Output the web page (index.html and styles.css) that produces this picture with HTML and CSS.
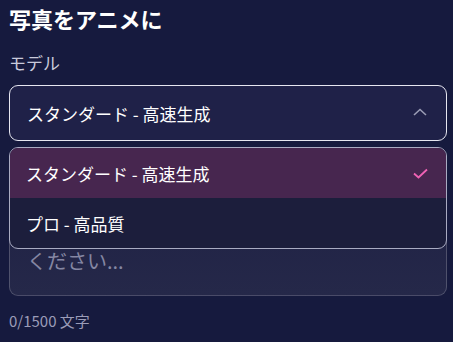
FILE: index.html
```html
<!DOCTYPE html>
<html lang="ja">
<head>
    <meta charset="UTF-8">
    <meta name="viewport" content="width=device-width, initial-scale=1.0">
    <title>写真をアニメに</title>
    <link rel="stylesheet" href="styles.css">
</head>
<body>
    <div class="panel">
        <h2 class="title">写真をアニメに</h2>

        <label class="label">モデル</label>
        <div class="select-wrap">
            <div class="select">
                <span>スタンダード - 高速生成</span>
                <svg class="chevron" width="14" height="8" viewBox="0 0 14 8">
                    <path d="M1 7 L7 1.5 L13 7" fill="none" stroke="#9b9db5" stroke-width="1.6"/>
                </svg>
            </div>
            <div class="dropdown">
                <div class="option selected">
                    <span>スタンダード - 高速生成</span>
                    <svg class="check" width="15" height="11" viewBox="0 0 15 11">
                        <path d="M1 5.5 L5.5 9.5 L14 1.5" fill="none" stroke="#f062b4" stroke-width="1.8"/>
                    </svg>
                </div>
                <div class="option">
                    <span>プロ - 高品質</span>
                </div>
            </div>
        </div>

        <div class="prompt">
            <div class="placeholder">ください...</div>
        </div>
        <div class="counter">0/1500 文字</div>
    </div>
</body>
</html>
```

FILE: styles.css
```css
* {
    margin: 0;
    padding: 0;
    box-sizing: border-box;
    font-family: 'Noto Sans CJK JP', 'Noto Sans', sans-serif;
}

body {
    background: #161a3e;
    color: #fff;
    overflow: hidden;
}

.panel {
    padding: 0 6px 0 9px;
}

.title {
    font-size: 22px;
    font-weight: 700;
    line-height: 30px;
    margin-top: 3px;
}

.label {
    display: block;
    margin-top: 18px;
    font-size: 17px;
    line-height: 24px;
    color: #c9cadb;
}

.select-wrap {
    position: relative;
    margin-top: 10px;
}

.select {
    display: flex;
    align-items: center;
    justify-content: space-between;
    height: 56px;
    padding: 0 19px 0 17px;
    background: #1f2148;
    border: 1px solid #e6e6f0;
    border-radius: 9px;
    font-size: 17px;
}

.chevron {
    margin-top: -3px;
}

.dropdown {
    position: absolute;
    top: 62px;
    left: 0;
    right: 0;
    z-index: 2;
    border: 1px solid #a9abc2;
    border-radius: 9px;
    overflow: hidden;
    background: #1c1e3c;
}

.option {
    display: flex;
    align-items: center;
    justify-content: space-between;
    height: 50px;
    padding: 0 18px 0 16px;
    font-size: 17px;
}

.option.selected {
    background: #47264f;
}

.prompt {
    margin-top: 8px;
    height: 147px;
    padding: 0 17px;
    border: 1px solid rgba(255, 255, 255, 0.2);
    border-radius: 9px;
    background: linear-gradient(180deg, #1d1f43, #252849);
}

.placeholder {
    padding-top: 96px;
    font-size: 20px;
    line-height: 30px;
    color: #8587a3;
}

.counter {
    margin-top: 14px;
    font-size: 15px;
    color: #9b9cb8;
}
```
